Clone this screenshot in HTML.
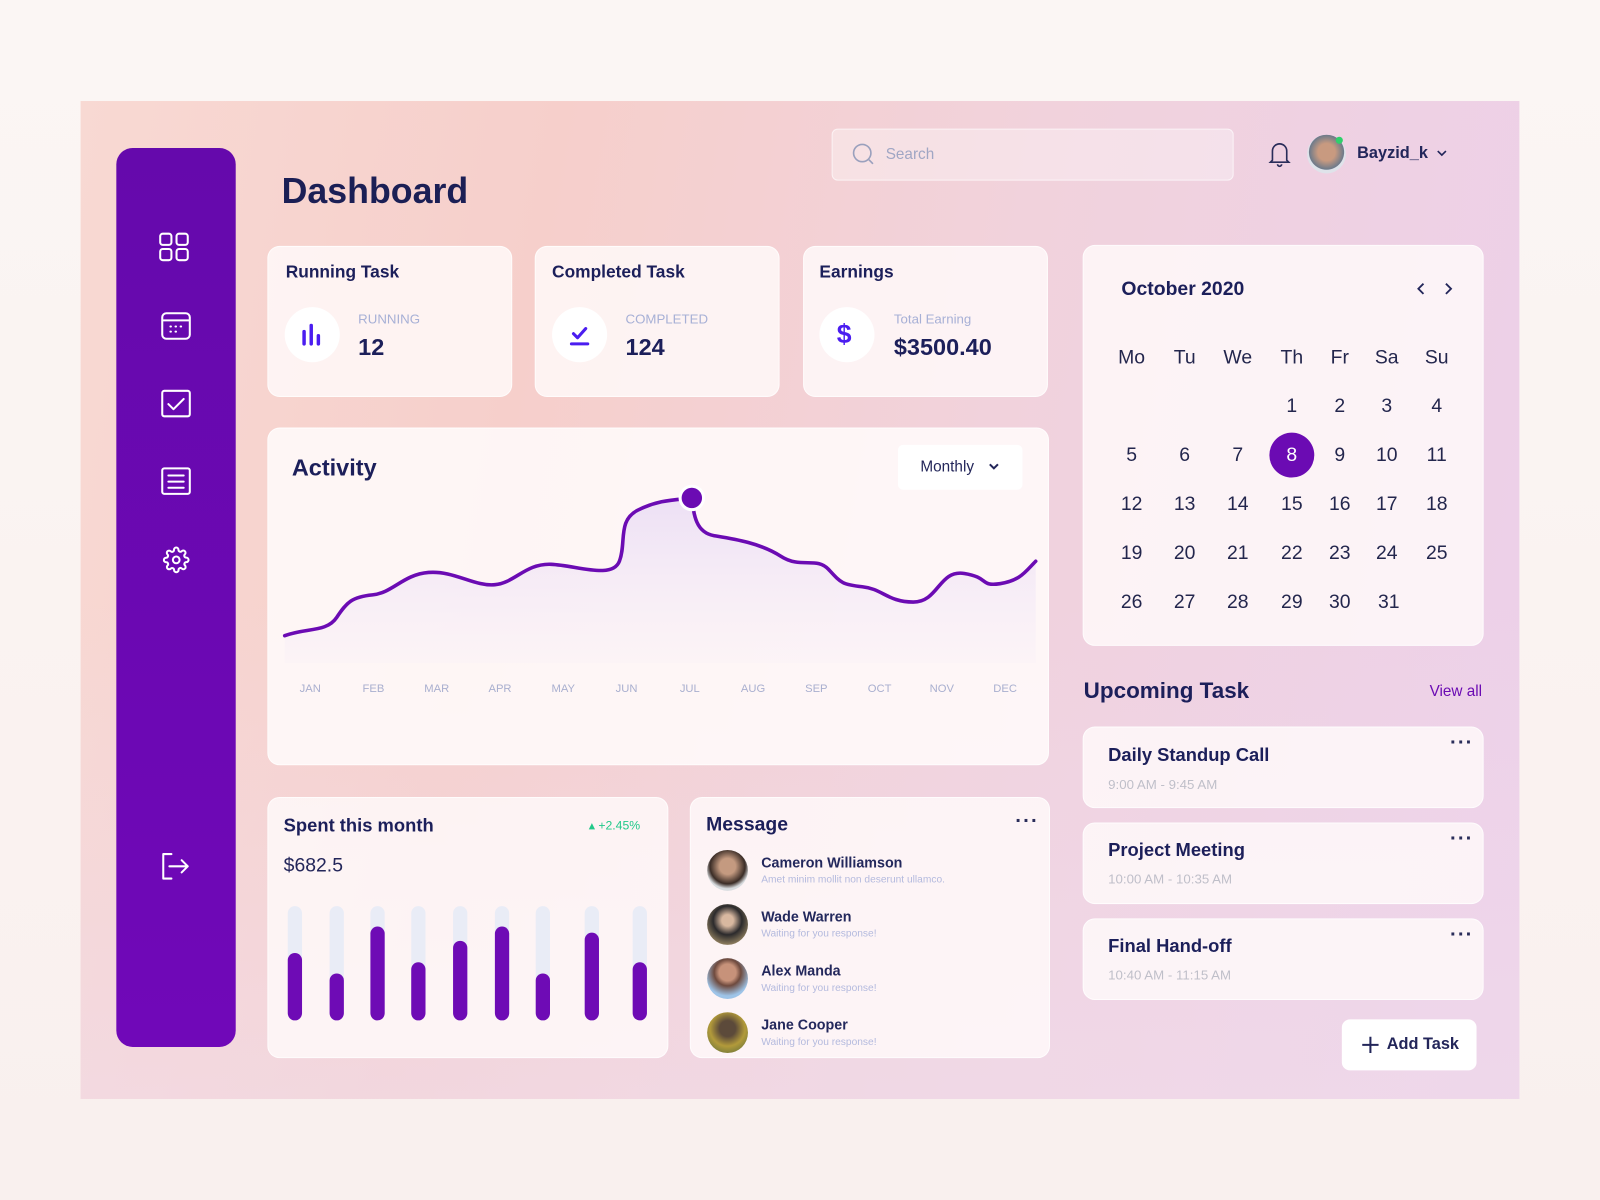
<!DOCTYPE html>
<html><head><meta charset="utf-8"><style>
*{margin:0;padding:0;box-sizing:border-box}
body{width:1600px;height:1200px;overflow:hidden;background:#f9f3f1;font-family:"Liberation Sans",sans-serif;color:#1c1f5a}
#w{position:absolute;left:0;top:0;width:1568px;height:1176px;transform:scale(1.020408);transform-origin:0 0;background:linear-gradient(180deg,#fbf6f4,#f9f0ee)}
.a{position:absolute}
#panel{left:79px;top:99px;width:1410px;height:978px;background:linear-gradient(100deg,#f8d9d3 0%,#f6cfcb 30%,#f1d2dc 60%,#ecd0ea 100%)}
#panel2{left:79px;top:99px;width:1410px;height:978px;background:linear-gradient(180deg,rgba(255,255,255,0) 50%,rgba(240,220,235,.6) 100%)}
.card{position:absolute;background:rgba(255,250,250,.82);border-radius:12px;border:1px solid rgba(255,255,255,.7)}
#side{left:114px;top:145px;width:117px;height:881px;border-radius:16px;background:linear-gradient(180deg,#6509ac,#7008b8)}
.t{font-weight:bold}
.lbl{font-size:13px;color:#a7b0d6}
.circ{position:absolute;width:54px;height:54px;border-radius:50%;background:#fff}
.cal{position:absolute;width:40px;text-align:center;font-size:19px;color:#23264d}
.mo{position:absolute;font-size:11px;color:#a9afcf;width:40px;text-align:center}
.track{position:absolute;width:14px;border-radius:7px;background:#e9ecf6}
.fill{position:absolute;left:0;bottom:0;width:14px;border-radius:7px;background:#6e0bb5}
.av{position:absolute;left:693px;width:40px;height:40px;border-radius:50%}
.nm{position:absolute;left:746px;font-size:14px;font-weight:bold;color:#23285c}
.sub{position:absolute;left:746px;font-size:10px;color:#b4bade}
.dots{position:absolute;font-size:20px;font-weight:bold;letter-spacing:1px;color:#2a2d5a;line-height:10px}
</style></head><body><div id="w">
<div id="panel" class="a"></div><div id="panel2" class="a"></div>
<div id="side" class="a"></div>
<svg class="a" style="left:114px;top:145px" width="117" height="881" fill="none" stroke="#fff" stroke-width="2" stroke-linecap="round" stroke-linejoin="round">
<rect x="43" y="84" width="11" height="11" rx="2.5"/><rect x="59" y="84" width="11" height="11" rx="2.5"/><rect x="43" y="99" width="11" height="11" rx="2.5"/><rect x="59" y="99" width="11" height="11" rx="2.5"/>
<rect x="45" y="162" width="27" height="25" rx="4"/><line x1="46" y1="169" x2="71" y2="169"/><path d="M53 175h.5M58 175h.5M63 175h.5M53 180h.5M58 180h.5"/>
<rect x="45" y="238" width="27" height="25" rx="2"/><path d="M51 251l5 5 10-10"/>
<rect x="45" y="314" width="27" height="25" rx="2"/><path d="M51 321h15M51 327h15M51 333h15"/>
<g transform="translate(45.5,390.5) scale(1.1)" stroke-width="1.8"><circle cx="12" cy="12" r="3"/><path d="M19.4 15a1.65 1.65 0 0 0 .33 1.820l.06.06a2 2 0 0 1 0 2.83 2 2 0 0 1-2.83 0l-.06-.06a1.65 1.65 0 0 0-1.82-.33 1.65 1.65 0 0 0-1 1.51V21a2 2 0 0 1-2 2 2 2 0 0 1-2-2v-.09A1.65 1.65 0 0 0 9 19.4a1.65 1.65 0 0 0-1.82.33l-.06.06a2 2 0 0 1-2.83 0 2 2 0 0 1 0-2.830l.06-.06a1.65 1.65 0 0 0 .33-1.82 1.65 1.65 0 0 0-1.51-1H3a2 2 0 0 1-2-2 2 2 0 0 1 2-2h.09A1.65 1.65 0 0 0 4.6 9a1.65 1.65 0 0 0-.33-1.82l-.06-.06a2 2 0 0 1 0-2.83 2 2 0 0 1 2.83 0l.06.06a1.65 1.65 0 0 0 1.82.33H9a1.65 1.65 0 0 0 1-1.51V3a2 2 0 0 1 2-2 2 2 0 0 1 2 2v.09a1.65 1.65 0 0 0 1 1.51 1.65 1.65 0 0 0 1.82-.33l.06-.06a2 2 0 0 1 2.83 0 2 2 0 0 1 0 2.83l-.06.06a1.65 1.65 0 0 0-.33 1.82V9a1.65 1.65 0 0 0 1.51 1H21a2 2 0 0 1 2 2 2 2 0 0 1-2 2h-.09a1.65 1.65 0 0 0-1.51 1z"/></g>
<path d="M54 692h-8v24h8M52 704h18M64 698l6 6-6 6"/>
</svg>
<div class="a t" style="left:276px;top:168px;font-size:35px;color:#1b1f55">Dashboard</div>
<div class="a" style="left:815px;top:126px;width:394px;height:51px;border-radius:6px;background:rgba(255,255,255,.35);border:1px solid rgba(255,255,255,.6)"></div>
<svg class="a" style="left:835px;top:140px" width="24" height="24" fill="none" stroke="#9aa0bd" stroke-width="1.6"><circle cx="10" cy="10" r="8.5"/><path d="M16.5 16.5l4 4"/></svg>
<div class="a" style="left:868px;top:143px;font-size:15px;color:#a0a6c4">Search</div>
<svg class="a" style="left:1242px;top:137px" width="24" height="28" fill="none" stroke="#2a2d5a" stroke-width="1.6"><path d="M5 20V11a7 7 0 0114 0v9l2 2H3z"/><path d="M10 24a2 2 0 004 0"/></svg>
<div class="a" style="left:1281px;top:132px;width:38px;height:38px;border-radius:50%;background:radial-gradient(circle at 50% 45%,#c89a80 30%,#6d7a8a 60%,#dfe3ea 62%)"></div>
<div class="a" style="left:1309px;top:134px;width:7px;height:7px;border-radius:50%;background:#2fd06b"></div>
<div class="a t" style="left:1330px;top:142px;font-size:16px;color:#22265a">Bayzid_k</div>
<svg class="a" style="left:1407px;top:146px" width="12" height="10" fill="none" stroke="#22265a" stroke-width="1.6"><path d="M2 2l4 4 4-4"/></svg>

<div class="card" style="left:262px;top:241px;width:240px;height:148px"></div>
<div class="card" style="left:524px;top:241px;width:240px;height:148px"></div>
<div class="card" style="left:787px;top:241px;width:240px;height:148px"></div>
<div class="a t" style="left:280px;top:257px;font-size:17px">Running Task</div>
<div class="a t" style="left:541px;top:257px;font-size:17px">Completed Task</div>
<div class="a t" style="left:803px;top:257px;font-size:17px">Earnings</div>
<div class="circ" style="left:279px;top:301px"></div><div class="circ" style="left:541px;top:301px"></div><div class="circ" style="left:803px;top:301px"></div>
<svg class="a" style="left:279px;top:301px" width="54" height="54" stroke="#4b1df0" stroke-width="3.4" stroke-linecap="round"><path d="M19 24v12M26 18v18M33 28v8"/></svg>
<svg class="a" style="left:541px;top:301px" width="54" height="54" fill="none" stroke="#4b1df0" stroke-width="3" stroke-linecap="round" stroke-linejoin="round"><path d="M21 26l4 4 8-9M19 36h16"/></svg>
<div class="a t" style="left:820px;top:312px;font-size:26px;color:#4b1df0">$</div>
<div class="a lbl" style="left:351px;top:305px">RUNNING</div>
<div class="a lbl" style="left:613px;top:305px">COMPLETED</div>
<div class="a lbl" style="left:876px;top:305px">Total Earning</div>
<div class="a t" style="left:351px;top:327px;font-size:23px">12</div>
<div class="a t" style="left:613px;top:327px;font-size:23px">124</div>
<div class="a t" style="left:876px;top:327px;font-size:23px">$3500.40</div>

<div class="card" style="left:262px;top:419px;width:766px;height:331px;background:rgba(255,250,251,.88)"></div>
<div class="a t" style="left:286px;top:445px;font-size:23px">Activity</div>
<div class="a" style="left:880px;top:436px;width:122px;height:44px;background:#fff;border-radius:5px"></div>
<div class="a" style="left:902px;top:449px;font-size:15px;color:#23265a">Monthly</div>
<svg class="a" style="left:968px;top:453px" width="12" height="10" fill="none" stroke="#23265a" stroke-width="2"><path d="M2 2l4 4 4-4"/></svg>
<svg class="a" style="left:0;top:0" width="1568" height="1176">
<defs><linearGradient id="g" x1="0" y1="0" x2="0" y2="1"><stop offset="0" stop-color="#e5d6f4" stop-opacity=".7"/><stop offset="1" stop-color="#f3eaf8" stop-opacity=".2"/></linearGradient></defs>
<path d="M279 623C300 615 320 620 330 605S345 585 365 583 395 563 420 561 465 575 485 573 515 552 540 553 600 568 607 550 605 510 625 500 660 490 678 488C680 505 682 522 700 525S745 532 765 545 800 545 812 558 825 573 845 575 870 590 895 590 920 558 945 562 960 575 980 572 1005 560 1015 550V650H279Z" fill="url(#g)"/>
<path d="M279 623C300 615 320 620 330 605S345 585 365 583 395 563 420 561 465 575 485 573 515 552 540 553 600 568 607 550 605 510 625 500 660 490 678 488C680 505 682 522 700 525S745 532 765 545 800 545 812 558 825 573 845 575 870 590 895 590 920 558 945 562 960 575 980 572 1005 560 1015 550" fill="none" stroke="#6b0bb3" stroke-width="3.5" stroke-linecap="round"/>
<circle cx="678" cy="488" r="13" fill="#fff"/><circle cx="678" cy="488" r="10" fill="#6b0bb3"/>
</svg>
<div class="mo" style="left:284px;top:669px">JAN</div><div class="mo" style="left:346px;top:669px">FEB</div><div class="mo" style="left:408px;top:669px">MAR</div><div class="mo" style="left:470px;top:669px">APR</div><div class="mo" style="left:532px;top:669px">MAY</div><div class="mo" style="left:594px;top:669px">JUN</div><div class="mo" style="left:656px;top:669px">JUL</div><div class="mo" style="left:718px;top:669px">AUG</div><div class="mo" style="left:780px;top:669px">SEP</div><div class="mo" style="left:842px;top:669px">OCT</div><div class="mo" style="left:903px;top:669px">NOV</div><div class="mo" style="left:965px;top:669px">DEC</div>

<div class="card" style="left:262px;top:781px;width:393px;height:256px"></div>
<div class="a t" style="left:278px;top:799px;font-size:18px">Spent this month</div>
<div class="a" style="left:577px;top:802px;font-size:12px;color:#22c98a">▴ +2.45%</div>
<div class="a" style="left:278px;top:838px;font-size:19px;color:#23265a">$682.5</div>
<div class="track" style="left:282px;top:888px;height:112px"><div class="fill" style="height:66px"></div></div>
<div class="track" style="left:323px;top:888px;height:112px"><div class="fill" style="height:46px"></div></div>
<div class="track" style="left:363px;top:888px;height:112px"><div class="fill" style="height:92px"></div></div>
<div class="track" style="left:403px;top:888px;height:112px"><div class="fill" style="height:57px"></div></div>
<div class="track" style="left:444px;top:888px;height:112px"><div class="fill" style="height:78px"></div></div>
<div class="track" style="left:485px;top:888px;height:112px"><div class="fill" style="height:92px"></div></div>
<div class="track" style="left:525px;top:888px;height:112px"><div class="fill" style="height:46px"></div></div>
<div class="track" style="left:573px;top:888px;height:112px"><div class="fill" style="height:86px"></div></div>
<div class="track" style="left:620px;top:888px;height:112px"><div class="fill" style="height:57px"></div></div>

<div class="card" style="left:676px;top:781px;width:353px;height:256px"></div>
<div class="a t" style="left:692px;top:798px;font-size:19px">Message</div>
<div class="dots" style="left:995px;top:800px">···</div>
<div class="av" style="top:833px;background:radial-gradient(circle at 50% 40%,#c49a80 25%,#3a2c26 55%,#d9dde0 70%)"></div>
<div class="av" style="top:886px;background:radial-gradient(circle at 50% 40%,#d8b8a0 18%,#2b2a2c 45%,#8a7a5c 75%)"></div>
<div class="av" style="top:939px;background:radial-gradient(circle at 50% 35%,#c7927a 25%,#6e4a3e 40%,#9ec4e8 70%)"></div>
<div class="av" style="top:992px;background:radial-gradient(circle at 50% 40%,#5c4a3a 25%,#b29a3a 55%,#7b7d3a 80%)"></div>
<div class="nm" style="top:837px">Cameron Williamson</div><div class="sub" style="top:857px">Amet minim mollit non deserunt ullamco.</div>
<div class="nm" style="top:890px">Wade Warren</div><div class="sub" style="top:910px">Waiting for you response!</div>
<div class="nm" style="top:943px">Alex Manda</div><div class="sub" style="top:963px">Waiting for you response!</div>
<div class="nm" style="top:996px">Jane Cooper</div><div class="sub" style="top:1016px">Waiting for you response!</div>

<div class="card" style="left:1061px;top:240px;width:393px;height:393px"></div>
<div class="a t" style="left:1099px;top:273px;font-size:19px">October 2020</div>
<svg class="a" style="left:1385px;top:276px" width="44" height="14" fill="none" stroke="#23265a" stroke-width="1.8"><path d="M10 2l-5 5 5 5M32 2l5 5-5 5"/></svg>
<div class="a" style="left:1244px;top:424px;width:44px;height:44px;border-radius:50%;background:#6b0bb3"></div>
<div class="cal" style="left:1089px;top:340px">Mo</div><div class="cal" style="left:1141px;top:340px">Tu</div><div class="cal" style="left:1193px;top:340px">We</div><div class="cal" style="left:1246px;top:340px">Th</div><div class="cal" style="left:1293px;top:340px">Fr</div><div class="cal" style="left:1339px;top:340px">Sa</div><div class="cal" style="left:1388px;top:340px">Su</div>
<div class="cal" style="left:1246px;top:388px">1</div><div class="cal" style="left:1293px;top:388px">2</div><div class="cal" style="left:1339px;top:388px">3</div><div class="cal" style="left:1388px;top:388px">4</div>
<div class="cal" style="left:1089px;top:436px">5</div><div class="cal" style="left:1141px;top:436px">6</div><div class="cal" style="left:1193px;top:436px">7</div><div class="cal" style="left:1246px;top:436px;color:#fff">8</div><div class="cal" style="left:1293px;top:436px">9</div><div class="cal" style="left:1339px;top:436px">10</div><div class="cal" style="left:1388px;top:436px">11</div>
<div class="cal" style="left:1089px;top:484px">12</div><div class="cal" style="left:1141px;top:484px">13</div><div class="cal" style="left:1193px;top:484px">14</div><div class="cal" style="left:1246px;top:484px">15</div><div class="cal" style="left:1293px;top:484px">16</div><div class="cal" style="left:1339px;top:484px">17</div><div class="cal" style="left:1388px;top:484px">18</div>
<div class="cal" style="left:1089px;top:532px">19</div><div class="cal" style="left:1141px;top:532px">20</div><div class="cal" style="left:1193px;top:532px">21</div><div class="cal" style="left:1246px;top:532px">22</div><div class="cal" style="left:1293px;top:532px">23</div><div class="cal" style="left:1339px;top:532px">24</div><div class="cal" style="left:1388px;top:532px">25</div>
<div class="cal" style="left:1089px;top:580px">26</div><div class="cal" style="left:1141px;top:580px">27</div><div class="cal" style="left:1193px;top:580px">28</div><div class="cal" style="left:1246px;top:580px">29</div><div class="cal" style="left:1293px;top:580px">30</div><div class="cal" style="left:1341px;top:580px">31</div>

<div class="a t" style="left:1062px;top:664px;font-size:22px">Upcoming Task</div>
<div class="a" style="left:1401px;top:669px;font-size:15px;color:#6b0bb3">View all</div>
<div class="card" style="left:1061px;top:712px;width:393px;height:80px"></div>
<div class="card" style="left:1061px;top:806px;width:393px;height:80px"></div>
<div class="card" style="left:1061px;top:900px;width:393px;height:80px"></div>
<div class="a t" style="left:1086px;top:730px;font-size:18px">Daily Standup Call</div><div class="a" style="left:1086px;top:761px;font-size:13px;color:#bfbfc9">9:00 AM - 9:45 AM</div>
<div class="a t" style="left:1086px;top:823px;font-size:18px">Project Meeting</div><div class="a" style="left:1086px;top:854px;font-size:13px;color:#bfbfc9">10:00 AM - 10:35 AM</div>
<div class="a t" style="left:1086px;top:917px;font-size:18px">Final Hand-off</div><div class="a" style="left:1086px;top:948px;font-size:13px;color:#bfbfc9">10:40 AM - 11:15 AM</div>
<div class="dots" style="left:1421px;top:723px">···</div><div class="dots" style="left:1421px;top:817px">···</div><div class="dots" style="left:1421px;top:911px">···</div>
<div class="a" style="left:1315px;top:999px;width:132px;height:50px;border-radius:8px;background:#fff"></div>
<svg class="a" style="left:1334px;top:1015px" width="18" height="18" stroke="#23265a" stroke-width="2"><path d="M9 1v16M1 9h16"/></svg>
<div class="a" style="left:1359px;top:1015px;font-size:16px;color:#23265a;font-weight:bold">Add Task</div>
</div></body></html>
